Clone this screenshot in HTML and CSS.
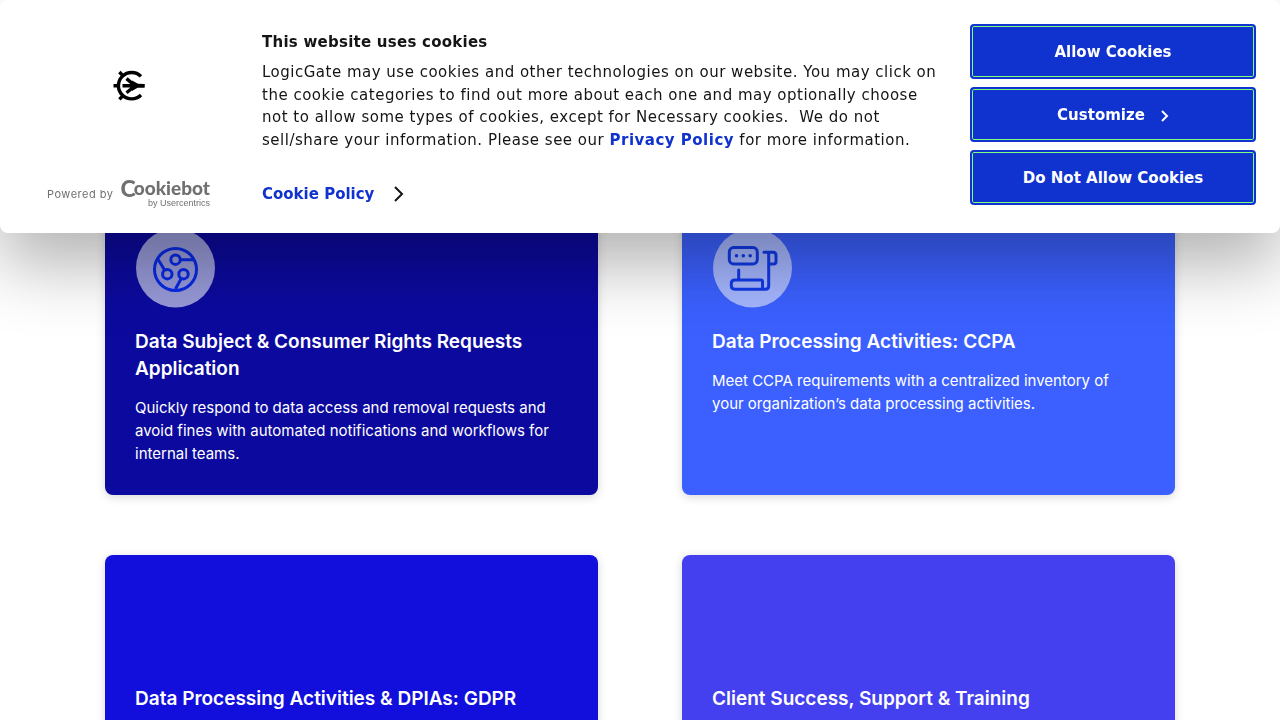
FILE: index.html
```html
<!DOCTYPE html>
<html lang="en">
<head>
<meta charset="utf-8">
<meta name="viewport" content="width=device-width, initial-scale=1">
<title>LogicGate Applications</title>
<link rel="stylesheet" href="styles.css">
</head>
<body>
<section class="banner" role="dialog" aria-labelledby="banner-title">
  <div class="brand">
    <svg class="brand-logo" width="32" height="32" viewBox="0 0 32 32" fill="none" stroke="#000" stroke-width="3.4" aria-label="LogicGate">
      <path d="M28 6.400A13.200 13.200 0 1 0 28 25"/>
      <path d="M0.500 15.700H4.500M6.400 2L9.800 5.600M6.400 29.400L9.800 25.800"/>
      <path d="M9.500 15.700H31.500M13.500 8.600L22 15.700L13.500 22.800"/>
      <path d="M19 10.500L25 13.800L31.500 14V17.400L25 17.600L19 20.900Z" fill="#000" stroke="none"/>
    </svg>
    <a class="powered" href="#">
      <span class="powered-by">Powered by</span>
      <span class="cookiebot"><span class="cookiebot-name"><span class="cookiebot-c">C</span>ookiebot</span><span class="cookiebot-by">by Usercentrics</span></span>
    </a>
  </div>
  <div class="message">
    <h2 class="message-title" id="banner-title">This website uses cookies</h2>
    <p class="message-text">LogicGate may use cookies and other technologies on our website. You may click on the cookie categories to find out more about each one and may optionally choose not to allow some types of cookies, except for Necessary cookies.&nbsp; We do not sell/share your information. Please see our <a class="link" href="#">Privacy Policy</a> for more information.</p>
    <a class="link policy" href="#">Cookie Policy
      <svg width="10" height="16" viewBox="0 0 10 16" fill="none" stroke="#141414" stroke-width="2"><path d="M1 1L8 8L1 15"/></svg>
    </a>
  </div>
  <div class="actions">
    <button class="action" type="button">Allow Cookies</button>
    <button class="action" type="button">Customize <svg class="action-arrow" width="8" height="12" viewBox="0 0 8 12" fill="none" stroke="#fff" stroke-width="2"><path d="M1 1L6 6L1 11"/></svg></button>
    <button class="action" type="button">Do Not Allow Cookies</button>
  </div>
</section>
<main class="cards">
  <article class="card navy">
    <svg class="card-icon" width="80" height="80" viewBox="0 0 80 80" fill="none" stroke="#0929e6" stroke-width="3">
      <circle cx="40.500" cy="40" r="39.500" fill="#f5faff" fill-opacity=".6" stroke="none"/>
      <circle cx="40.500" cy="41.500" r="21"/>
      <circle cx="40.500" cy="31.700" r="4.700"/><circle cx="32.300" cy="46.200" r="4.700"/><circle cx="48.500" cy="46.200" r="4.700"/>
      <path d="M45 31.700H59M29.700 42.200L22.500 30.500M46.200 50.500L40.500 61"/>
    </svg>
    <h3 class="card-title">Data Subject &amp; Consumer Rights Requests Application</h3>
    <p class="card-text">Quickly respond to data access and removal requests and avoid fines with automated notifications and workflows for internal teams.</p>
  </article>
  <article class="card azure">
    <svg class="card-icon" width="80" height="80" viewBox="0 0 80 80" fill="none" stroke="#103ae8" stroke-width="3" stroke-linecap="round" stroke-linejoin="round">
      <circle cx="40.500" cy="40" r="39.500" fill="#fff" fill-opacity=".54" stroke="none"/>
      <rect x="17.300" y="19.500" width="28" height="16.500" rx="4.500"/>
      <g fill="#103ae8" stroke="none"><circle cx="24.500" cy="27.700" r="1.800"/><circle cx="31.300" cy="27.700" r="1.800"/><circle cx="38.200" cy="27.700" r="1.800"/></g>
      <path d="M52 24.300H61Q64 24.300 64 27.500V33.500Q64 36 61.500 36H57M56.700 24.500V58Q56.700 61.200 53.500 61.200H23Q19.300 61.200 19.300 57.500V55.500Q19.300 52 23 52H49Q50.500 52 50.500 53.500V59Q50.500 61.200 52.500 61.200M26.700 42V51"/>
    </svg>
    <h3 class="card-title">Data Processing Activities: CCPA</h3>
    <p class="card-text">Meet CCPA requirements with a centralized inventory of your organization’s data processing activities.</p>
  </article>
  <article class="card blue">
    <div class="card-icon"></div>
    <h3 class="card-title">Data Processing Activities &amp; DPIAs: GDPR</h3>
  </article>
  <article class="card violet">
    <div class="card-icon"></div>
    <h3 class="card-title">Client Success, Support &amp; Training</h3>
  </article>
</main>
</body>
</html>
```
FILE: styles.css
```css
* { box-sizing: border-box; }
body { margin: 0; background: #fff; font-family: Inter, sans-serif; }
h2, h3, p { margin: 0; }
svg { display: block; flex: none; }

.banner {
  position: fixed;
  top: 0;
  left: 0;
  right: 0;
  z-index: 10;
  display: grid;
  grid-template-columns: 210px minmax(0, 1fr) 286px;
  padding: 24px 24px 24px 0;
  background: #fff;
  border-radius: 8px;
  box-shadow: 0 32px 68px rgba(0, 0, 0, .3);
  color: #141414;
  font: 15px/1.5 "DejaVu Sans", sans-serif;
}
.brand {
  display: flex;
  flex-direction: column;
  justify-content: space-between;
  padding: 46px 0 0 47px;
}
.brand-logo { margin-left: 66px; }
.powered {
  display: flex;
  justify-content: space-between;
  align-items: center;
  color: #707070;
  text-decoration: none;
}
.powered-by { font: 11px/16px Inter, sans-serif; letter-spacing: .5px; }
.cookiebot { display: flex; flex-direction: column; align-items: flex-end; }
.cookiebot-name { font: 900 19px/18px Lato, sans-serif; }
.cookiebot-c { margin-right: -2px; font-size: 23px; vertical-align: -2px; }
.cookiebot-by { font: 9px/12px "Liberation Sans", sans-serif; }

.message { padding: 6px 28px 3px 52px; letter-spacing: .5px; }
.message-title { font-size: 15px; line-height: 24px; letter-spacing: .25px; }
.message-text { margin-top: 7px; }
.link { color: #1032cf; font-weight: 700; text-decoration: none; }
.policy { display: flex; align-items: center; gap: 20px; margin-top: 32px; letter-spacing: normal; }

.actions { display: flex; flex-direction: column; gap: 8px; }
.action {
  display: flex;
  align-items: center;
  justify-content: center;
  gap: 16px;
  height: 55px;
  border: 2px solid #1032cf;
  border-radius: 4px;
  background: #1032cf;
  box-shadow: inset 0 0 0 1px #80ff80;
  color: #fff;
  font: 700 15px/24px "DejaVu Sans", sans-serif;
}
.action-arrow { margin-top: 2px; }

.cards {
  display: grid;
  grid-template-columns: 1fr 1fr;
  gap: 60px 84px;
  max-width: 1070px;
  margin: 0 auto;
  padding: 198px 0 60px;
}
.card {
  min-height: 297px;
  padding: 30px;
  border-radius: 8px;
  box-shadow: 0 2px 10px rgba(0, 0, 0, .16);
  color: #fff;
}
.navy { background: #0c0a9e; }
.azure { background: #3b60ff; }
.blue { background: #120fdc; }
.violet { background: #4440f0; }
.card-icon { height: 80px; }
.card-title { margin-top: 20px; font-size: 19px; font-weight: 600; line-height: 27px; }
.card-text { margin-top: 14px; padding-right: 12px; font-size: 15px; line-height: 23px; }
```
